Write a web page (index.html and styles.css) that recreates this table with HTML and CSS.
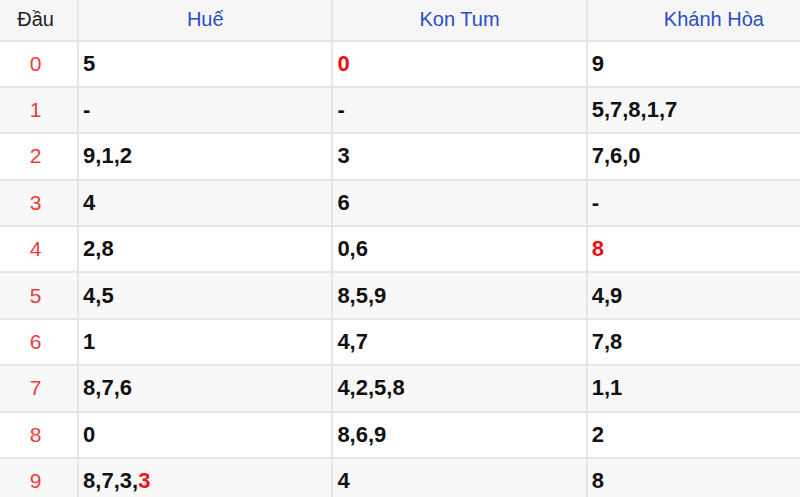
FILE: index.html
```html
<!DOCTYPE html>
<html lang="vi">
<head>
<meta charset="utf-8">
<title>Đầu</title>
<link rel="stylesheet" href="styles.css">
</head>
<body>
<table class="loto">
  <colgroup>
    <col class="c-head">
    <col class="c-prov">
    <col class="c-prov">
    <col class="c-prov">
  </colgroup>
  <thead>
    <tr class="hrow">
      <th class="dau">Đầu</th>
      <th class="prov">Huế</th>
      <th class="prov">Kon Tum</th>
      <th class="prov">Khánh Hòa</th>
    </tr>
  </thead>
  <tbody>
    <tr><td class="num">0</td><td>5</td><td><span class="hot">0</span></td><td>9</td></tr>
    <tr><td class="num">1</td><td>-</td><td>-</td><td>5,7,8,1,7</td></tr>
    <tr><td class="num">2</td><td>9,1,2</td><td>3</td><td>7,6,0</td></tr>
    <tr><td class="num">3</td><td>4</td><td>6</td><td>-</td></tr>
    <tr><td class="num">4</td><td>2,8</td><td>0,6</td><td><span class="hot">8</span></td></tr>
    <tr><td class="num">5</td><td>4,5</td><td>8,5,9</td><td>4,9</td></tr>
    <tr><td class="num">6</td><td>1</td><td>4,7</td><td>7,8</td></tr>
    <tr><td class="num">7</td><td>8,7,6</td><td>4,2,5,8</td><td>1,1</td></tr>
    <tr><td class="num">8</td><td>0</td><td>8,6,9</td><td>2</td></tr>
    <tr><td class="num">9</td><td>8,7,3,<span class="hot">3</span></td><td>4</td><td>8</td></tr>
  </tbody>
</table>
</body>
</html>
```
FILE: styles.css
```css
html, body {
  margin: 0;
  padding: 0;
  background: #ffffff;
  overflow: hidden;
}
body {
  width: 800px;
  height: 497px;
  font-family: "Liberation Sans", Arial, sans-serif;
}
.loto {
  border-collapse: collapse;
  table-layout: fixed;
  width: 842px;
}
.c-head { width: 78px; }
.c-prov { width: 254px; }
.loto th,
.loto td {
  border: 2px solid #e6e6e6;
  padding: 0 4px;
  vertical-align: middle;
  white-space: nowrap;
}
.loto tr > :first-child { border-left: none; }
.hrow th {
  border-top: none;
  height: 39.5px;
  background: #f6f6f6;
  font-weight: normal;
  font-size: 20px;
  text-align: center;
}
.hrow .dau { color: #222222; padding-right: 10px; }
.hrow .prov { color: #2a4ec4; }
.loto tbody td {
  height: 44.4px;
  font-size: 22px;
  font-weight: bold;
  color: #111111;
  text-align: left;
}
.loto tbody tr:nth-child(even) td { background: #f8f8f8; }
.loto tbody td.num {
  font-weight: normal;
  color: #f03a3a;
  text-align: center;
  padding-right: 10px;
  font-size: 21px;
}
.hot { color: #ee1111; }
```
